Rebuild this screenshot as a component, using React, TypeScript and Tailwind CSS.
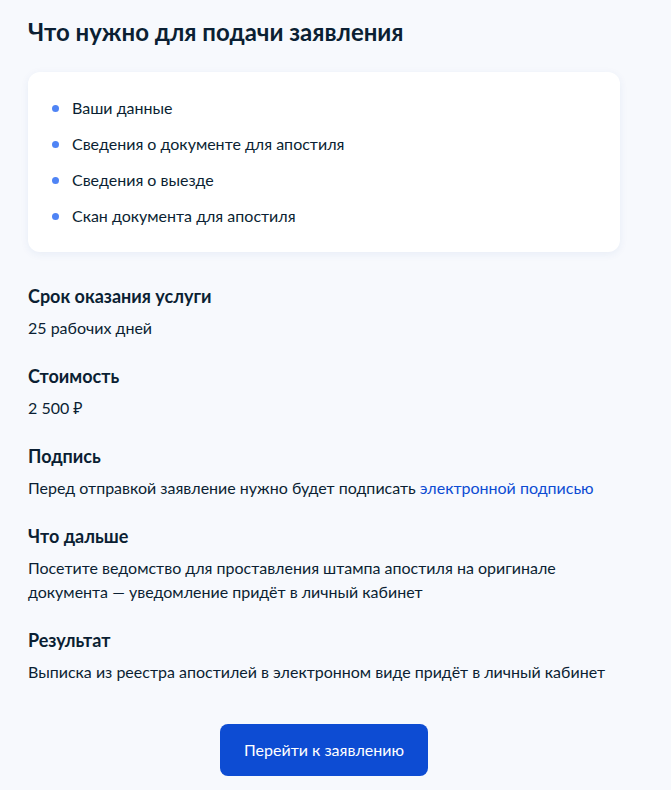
import React from 'react';

const requirements = [
  'Ваши данные',
  'Сведения о документе для апостиля',
  'Сведения о выезде',
  'Скан документа для апостиля',
];

const Section: React.FC<{ title: string; children: React.ReactNode }> = ({ title, children }) => (
  <div className="flex flex-col gap-2">
    <h3 className="text-[18px] leading-6 font-bold">{title}</h3>
    <p className="text-[16px] leading-6">{children}</p>
  </div>
);

const App: React.FC = () => {
  return (
    <div
      className="min-h-[790px] bg-[#f7f9fd] text-[#0b1f33]"
      style={{ fontFamily: 'Lato, "Noto Sans", sans-serif' }}
    >
      <div className="w-[592px] ml-[28px] pt-4 pb-4">
        <h2 className="text-[24px] leading-8 font-bold">Что нужно для подачи заявления</h2>

        <div className="mt-6 rounded-xl bg-white px-6 py-6 shadow-[0_2px_8px_rgba(30,70,160,0.07)]">
          <ul className="flex flex-col gap-3">
            {requirements.map((item) => (
              <li key={item} className="flex items-center gap-[13px] text-[16px] leading-6">
                <span className="h-[7px] w-[7px] shrink-0 rounded-full bg-[#4f84f5]" />
                {item}
              </li>
            ))}
          </ul>
        </div>

        <div className="mt-8 flex flex-col gap-6">
          <Section title="Срок оказания услуги">25 рабочих дней</Section>
          <Section title="Стоимость">2 500 ₽</Section>
          <Section title="Подпись">
            Перед отправкой заявление нужно будет подписать{' '}
            <a href="#" className="text-[#0d4cd3]">электронной подписью</a>
          </Section>
          <Section title="Что дальше">
            Посетите ведомство для проставления штампа апостиля на оригинале документа — уведомление придёт в личный кабинет
          </Section>
          <Section title="Результат">
            Выписка из реестра апостилей в электронном виде придёт в личный кабинет
          </Section>
        </div>

        <div className="mt-10 flex justify-center">
          <button className="h-[52px] w-[208px] rounded-lg bg-[#0d4cd3] text-[16px] text-white">
            Перейти к заявлению
          </button>
        </div>
      </div>
    </div>
  );
};

export default App;
